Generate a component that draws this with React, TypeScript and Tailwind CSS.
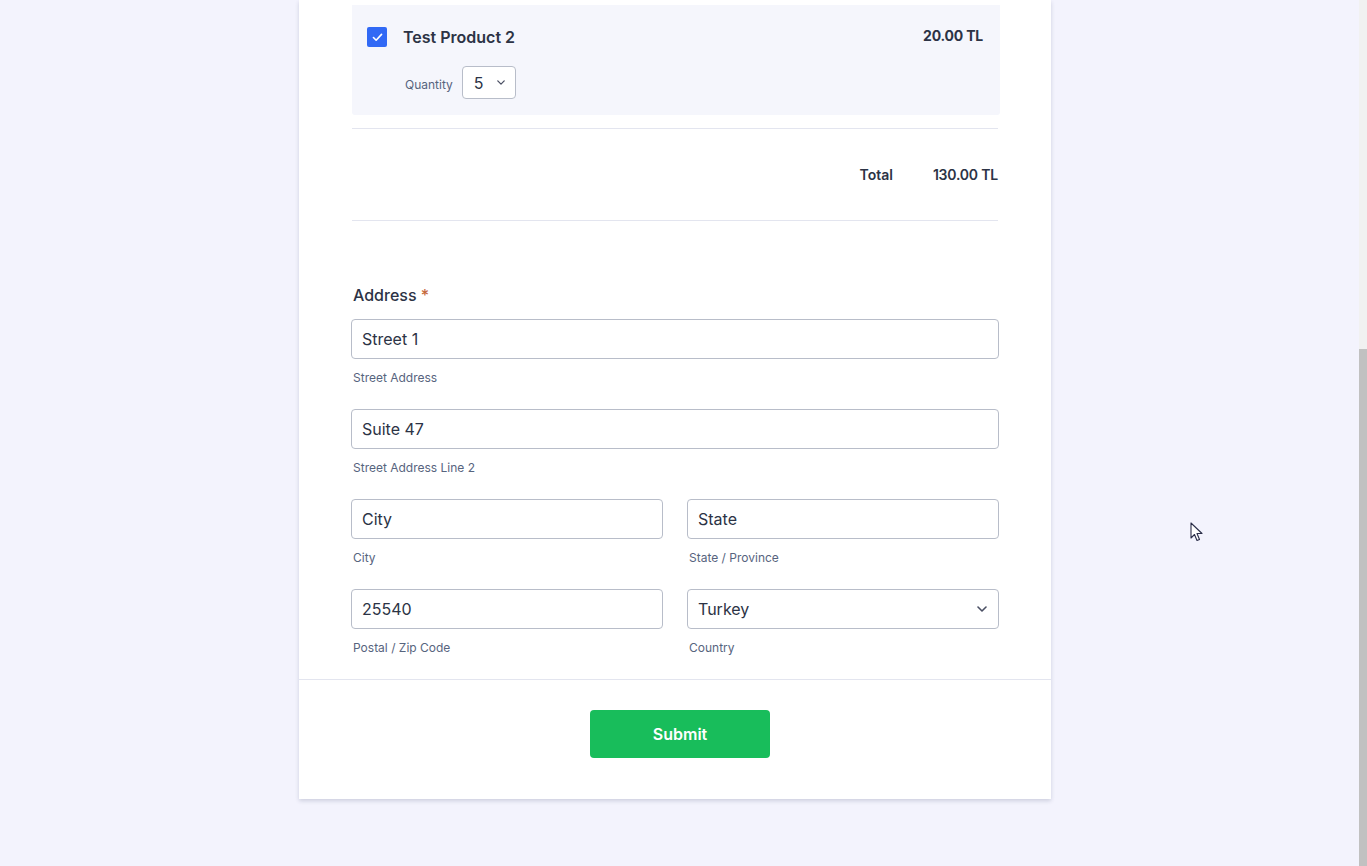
import React from "react";

function Chevron({ className }: { className?: string }) {
  return (
    <svg className={className} viewBox="0 0 10 6" fill="none">
      <path d="M1 1l4 4 4-4" stroke="currentColor" strokeWidth="1.6" strokeLinecap="round" strokeLinejoin="round" />
    </svg>
  );
}

function Field({ value, sub, select }: { value: string; sub: string; select?: boolean }) {
  return (
    <div className="flex flex-col mb-[23px]">
      <div className="h-10 rounded border border-[#b8bdc9] bg-white flex items-center px-[10px] text-[16px] text-[#2c3345]">
        <span className="flex-1">{value}</span>
        {select && <Chevron className="w-[10px] h-[6px] text-[#4a4f63] mr-[1px]" />}
      </div>
      <div className="mt-[11px] leading-4 text-[12px] text-[#57647e] pl-[2px]">{sub}</div>
    </div>
  );
}

export default function App() {
  return (
    <div
      className="h-[866px] w-[1367px] flex overflow-hidden bg-[#f3f3fd] relative"
      style={{ fontFamily: "Inter, 'Noto Sans', sans-serif" }}
    >
      <div className="w-[1350px] shrink-0 flex justify-center">
        <div className="w-[752px] h-[799px] bg-white shadow-[0_2px_4px_rgba(40,48,90,0.18)] flex flex-col">
          <div className="px-[52px] flex flex-col">
            {/* product */}
            <div className="mt-[5px] ml-[1px] mr-[-1px] h-[110px] bg-[#f5f6fc] rounded-b-[3px] flex flex-col">
              <div className="flex items-start pt-[22px] pl-[15px] pr-[17px]">
                <div className="w-5 h-5 rounded-[2px] bg-[#3169f5] flex items-center justify-center">
                  <svg viewBox="0 0 12 10" className="w-[11px] h-[9px]" fill="none">
                    <path d="M1.5 5l3 3 6-6.5" stroke="white" strokeWidth="1.8" strokeLinecap="round" strokeLinejoin="round" />
                  </svg>
                </div>
                <div className="ml-4 text-[16px] font-semibold text-[#2c3345] leading-5">Test Product 2</div>
                <div className="flex-1" />
                <div className="text-[14px] font-bold text-[#2c3345] leading-[18px] tracking-[-0.2px]">20.00 TL</div>
              </div>
              <div className="flex items-center pl-[53px] mt-[19px]">
                <span className="text-[12px] text-[#57647e] mt-[5px]">Quantity</span>
                <div className="ml-[9px] w-[54px] h-[33px] rounded border border-[#b8bdc9] bg-white flex items-center pl-[11px] pr-[10px] text-[16px] text-[#2c3345]">
                  <span className="flex-1">5</span>
                  <Chevron className="w-[8px] h-[5px] text-[#4a4f63]" />
                </div>
              </div>
            </div>
            {/* total */}
            <div className="mt-[13px] ml-[1px] mr-[1px] border-t border-b border-[#e3e5ef] h-[93px] flex items-center justify-end">
              <span className="text-[14px] font-semibold text-[#2c3345]">Total</span>
              <span className="ml-10 text-[14px] font-semibold text-[#2c3345] tracking-[-0.2px]">130.00 TL</span>
            </div>
            {/* address */}
            <div className="mt-[62px] text-[16px] leading-6 text-[#2c3345] font-medium pl-[2px]">
              Address <span className="text-[#c5683b]">*</span>
            </div>
            <div className="mt-3 flex flex-col">
              <Field value="Street 1" sub="Street Address" />
              <Field value="Suite 47" sub="Street Address Line 2" />
              <div className="grid grid-cols-2 gap-x-6">
                <Field value="City" sub="City" />
                <Field value="State" sub="State / Province" />
                <Field value="25540" sub="Postal / Zip Code" />
                <Field value="Turkey" sub="Country" select />
              </div>
            </div>
          </div>
          <div className="border-t border-[#e3e5ef] flex justify-center pt-[30px]">
            <button className="ml-[10px] w-[180px] h-12 rounded bg-[#18bd5b] text-white text-[16px] font-semibold">Submit</button>
          </div>
        </div>
      </div>
      <div className="w-[9px] shrink-0" />
      <div className="w-2 shrink-0 flex flex-col bg-[#f1f1f1]">
        <div className="h-[349px]" />
        <div className="flex-1 bg-[#c1c1c1]" />
      </div>
      {/* mouse cursor */}
      <svg className="absolute left-[1190px] top-[522px] w-[13px] h-[20px]" viewBox="0 0 13 20">
        <path d="M1 1v15l3.5-3.5 2.5 6 2.5-1-2.5-6H12L1 1z" fill="white" stroke="#2a2d48" strokeWidth="1.1" strokeLinejoin="round" />
      </svg>
    </div>
  );
}
